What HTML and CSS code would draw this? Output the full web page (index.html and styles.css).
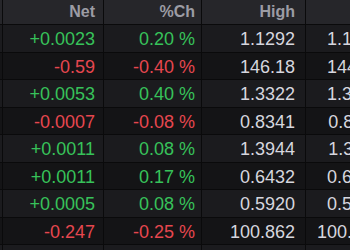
FILE: index.html
```html
<!DOCTYPE html>
<html>
<head>
<meta charset="utf-8">
<link rel="stylesheet" href="styles.css">
</head>
<body>
<div class="grid">
  <div class="row head">
    <div class="c c0"></div>
    <div class="c c1">Net</div>
    <div class="c c2">%Ch</div>
    <div class="c c3">High</div>
    <div class="c c4"></div>
  </div>
  <div class="row odd">
    <div class="c c0"></div>
    <div class="c c1 up">+0.0023</div>
    <div class="c c2 up">0.20 %</div>
    <div class="c c3">1.1292</div>
    <div class="c c4">1.1228</div>
  </div>
  <div class="row even">
    <div class="c c0"></div>
    <div class="c c1 dn">-0.59</div>
    <div class="c c2 dn">-0.40 %</div>
    <div class="c c3">146.18</div>
    <div class="c c4">144.80</div>
  </div>
  <div class="row odd">
    <div class="c c0"></div>
    <div class="c c1 up">+0.0053</div>
    <div class="c c2 up">0.40 %</div>
    <div class="c c3">1.3322</div>
    <div class="c c4">1.3247</div>
  </div>
  <div class="row even">
    <div class="c c0"></div>
    <div class="c c1 dn">-0.0007</div>
    <div class="c c2 dn">-0.08 %</div>
    <div class="c c3">0.8341</div>
    <div class="c c4">0.8311</div>
  </div>
  <div class="row odd">
    <div class="c c0"></div>
    <div class="c c1 up">+0.0011</div>
    <div class="c c2 up">0.08 %</div>
    <div class="c c3">1.3944</div>
    <div class="c c4">1.3911</div>
  </div>
  <div class="row even">
    <div class="c c0"></div>
    <div class="c c1 up">+0.0011</div>
    <div class="c c2 up">0.17 %</div>
    <div class="c c3">0.6432</div>
    <div class="c c4">0.6409</div>
  </div>
  <div class="row odd">
    <div class="c c0"></div>
    <div class="c c1 up">+0.0005</div>
    <div class="c c2 up">0.08 %</div>
    <div class="c c3">0.5920</div>
    <div class="c c4">0.5899</div>
  </div>
  <div class="row even">
    <div class="c c0"></div>
    <div class="c c1 dn">-0.247</div>
    <div class="c c2 dn">-0.25 %</div>
    <div class="c c3">100.862</div>
    <div class="c c4">100.515</div>
  </div>
  <div class="row odd">
    <div class="c c0"></div>
    <div class="c c1"></div>
    <div class="c c2"></div>
    <div class="c c3"></div>
    <div class="c c4"></div>
  </div>
</div>
</body>
</html>
```
FILE: styles.css
```css
html, body {
  margin: 0;
  padding: 0;
  background: #161618;
  overflow: hidden;
  width: 350px;
  height: 250px;
}
.grid {
  display: flex;
  flex-direction: column;
  width: 400px;
  font-family: "Liberation Sans", Arial, sans-serif;
  font-size: 18px;
  color: #d6d6de;
}
.row {
  display: grid;
  grid-template-columns: 3px 101px 98px 104px 84px;
  height: 27.5px;
  box-sizing: border-box;
  border-bottom: 1px solid #0a0a0b;
  flex: none;
}
.row .c { padding-top: 3px; }
.row.head {
  height: 25px;
  background: #26262a;
  color: #9c9ca4;
  font-weight: bold;
  font-size: 16px;
}
.row.head .c { padding-top: 0; }
.row.odd { background: #1b1b1e; }
.row.even { background: #141416; }
.c {
  display: flex;
  align-items: center;
  justify-content: flex-end;
  border-right: 1px solid #0a0a0b;
  white-space: nowrap;
  overflow: hidden;
  box-sizing: border-box;
}
.c1 { padding-right: 8px; }
.c2 { padding-right: 6px; }
.c3 { padding-right: 10px; }
.c4 { padding-right: 7px; }
.up { color: #37c25a; }
.dn { color: #e6474f; }
```
